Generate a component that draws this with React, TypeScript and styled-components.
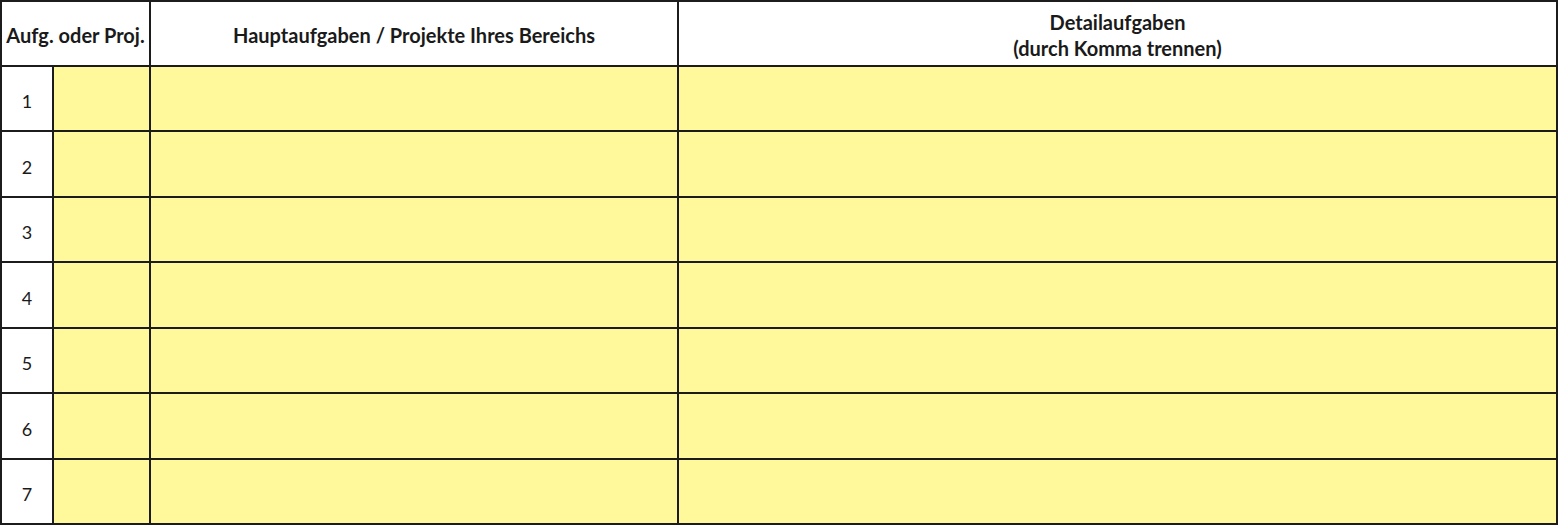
import React from "react";
import styled, { createGlobalStyle } from "styled-components";

const GlobalStyle = createGlobalStyle`
  html, body {
    margin: 0;
    padding: 0;
    background: #ffffff;
  }
  body {
    font-family: Lato, "Open Sans", "Liberation Sans", sans-serif;
    color: #1a1a1a;
  }
`;

const Sheet = styled.div`
  display: grid;
  grid-template-columns: 50px 95px 526px 877px;
  grid-template-rows: 63px 63px 64px 63px 64px 63px 64px 63px;
  gap: 2px;
  padding: 2px;
  width: fit-content;
  background: #1c1c1c;
`;

const HeadCell = styled.div<{ $span?: number }>`
  grid-column: span ${(p) => p.$span || 1};
  background: #ffffff;
  display: flex;
  flex-direction: column;
  align-items: center;
  justify-content: center;
  text-align: center;
  font-size: 20px;
  font-weight: 700;
  line-height: 26px;
  padding-top: 2px;
  white-space: nowrap;
`;

const NumCell = styled.div`
  background: #ffffff;
  display: flex;
  align-items: center;
  justify-content: center;
  font-size: 18px;
  padding-top: 5px;
`;

const InputCell = styled.div`
  background: #fff99b;
`;

const rows = [1, 2, 3, 4, 5, 6, 7];

const App: React.FC = () => {
  return (
    <>
      <GlobalStyle />
      <Sheet>
        <HeadCell $span={2}>Aufg. oder Proj.</HeadCell>
        <HeadCell>Hauptaufgaben / Projekte Ihres Bereichs</HeadCell>
        <HeadCell>
          <span>Detailaufgaben</span>
          <span>(durch Komma trennen)</span>
        </HeadCell>
        {rows.map((n) => (
          <React.Fragment key={n}>
            <NumCell>{n}</NumCell>
            <InputCell />
            <InputCell />
            <InputCell />
          </React.Fragment>
        ))}
      </Sheet>
    </>
  );
};

export default App;
